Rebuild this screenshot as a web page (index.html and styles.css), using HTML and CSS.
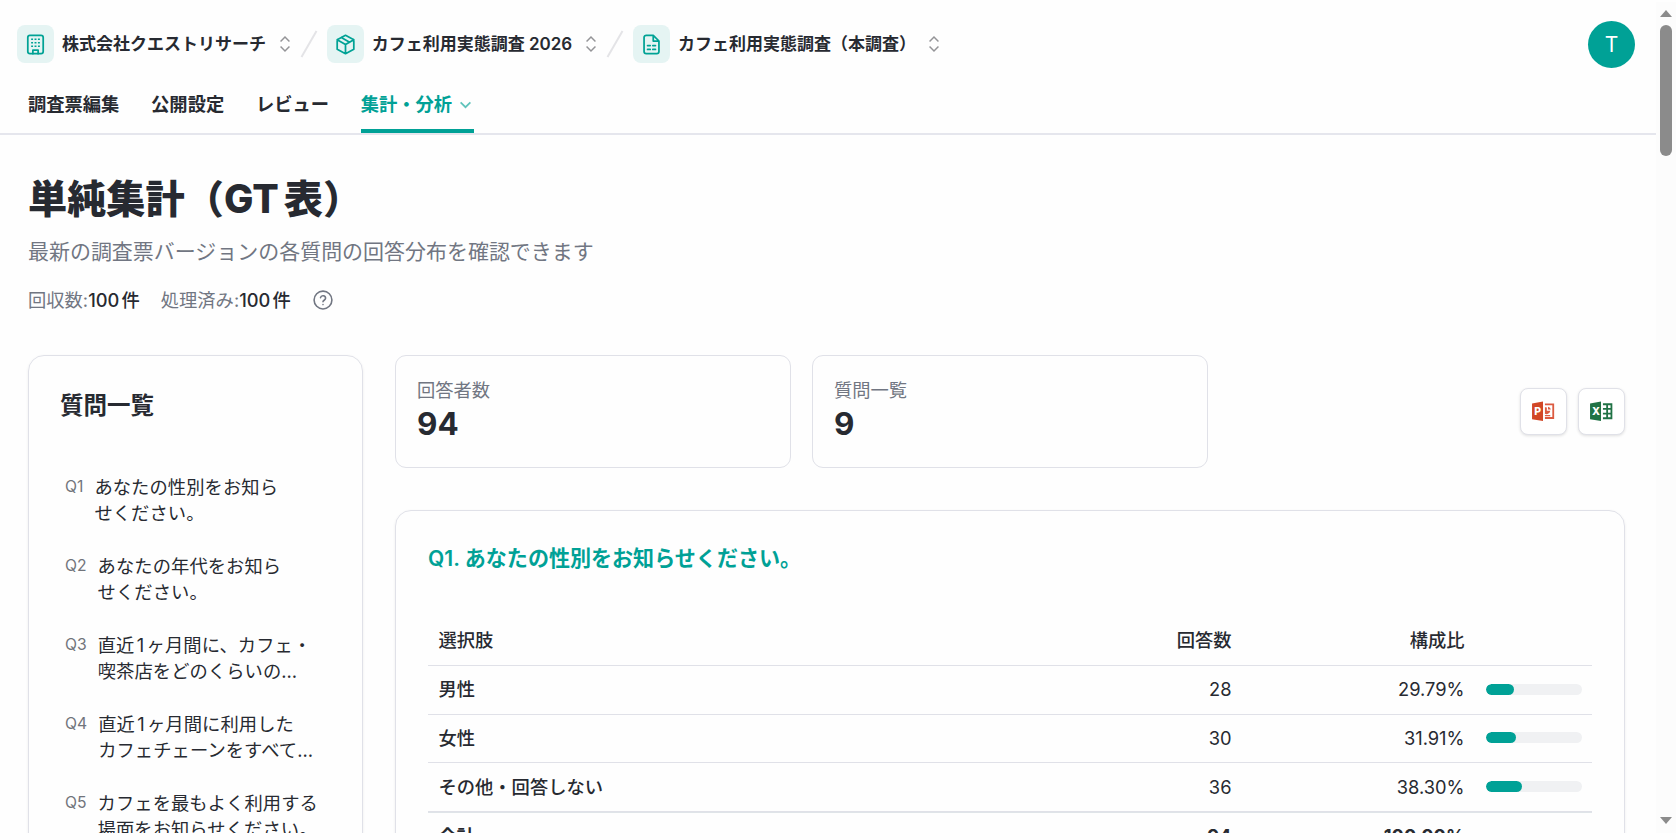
FILE: index.html
```html
<!DOCTYPE html>
<html lang="ja">
<head>
  <meta charset="UTF-8" />
  <meta name="viewport" content="width=device-width, initial-scale=1.0" />
  <title>単純集計（GT 表）</title>
  <link rel="stylesheet" href="styles.css">
</head>
<body>
  <div class="window">
    <div class="page">
      <header class="header">
        <div class="breadcrumb">
          <div class="crumb">
            <span class="crumb-icon">
              <!-- building -->
              <svg viewBox="0 0 24 24"><rect x="3.2" y="1.500" width="17.600" height="21" rx="2.500"/><path d="M9 22.500v-4h6v4"/><path class="dots" d="M7 6h2.200M10.900 6h2.200M14.800 6H17M7 10h2.200M10.900 10h2.200M14.800 10H17M7 14h2.200M10.900 14h2.200M14.800 14H17"/></svg>
            </span>
            <span class="crumb-name">株式会社クエストリサーチ</span>
            <svg class="updown" viewBox="0 0 12 18"><path d="M1 6.200l5-5 5 5M1 11.800l5 5 5-5"/></svg>
          </div>
          <svg class="slash" viewBox="0 0 18 28"><path d="M1.500 27L16.500 1"/></svg>
          <div class="crumb">
            <span class="crumb-icon">
              <!-- package -->
              <svg viewBox="0 0 24 24"><path d="M12 1.500l9.500 5v11l-9.500 5-9.500-5v-11zM2.500 6.500L12 12l9.500-5.500M12 12v10.500M7.200 4l9.500 5.400"/></svg>
            </span>
            <span class="crumb-name">カフェ利用実態調査 2026</span>
            <svg class="updown" viewBox="0 0 12 18"><path d="M1 6.200l5-5 5 5M1 11.800l5 5 5-5"/></svg>
          </div>
          <svg class="slash" viewBox="0 0 18 28"><path d="M1.500 27L16.500 1"/></svg>
          <div class="crumb">
            <span class="crumb-icon">
              <!-- spreadsheet file -->
              <svg viewBox="0 0 24 24"><path d="M14 1.500H6a2.500 2.500 0 0 0-2.500 2.500v16A2.500 2.500 0 0 0 6 22.500h12a2.500 2.500 0 0 0 2.500-2.500V8zM14 1.500V8h6.500M7.500 13.200h3M13.500 13.200h3M7.500 17.700h3M13.500 17.700h3"/></svg>
            </span>
            <span class="crumb-name">カフェ利用実態調査（本調査）</span>
            <svg class="updown" viewBox="0 0 12 18"><path d="M1 6.200l5-5 5 5M1 11.800l5 5 5-5"/></svg>
          </div>
          <div class="avatar">T</div>
        </div>
        <nav class="tabs">
          <a class="tab">調査票編集</a>
          <a class="tab">公開設定</a>
          <a class="tab">レビュー</a>
          <a class="tab active">集計・分析
            <svg viewBox="0 0 12 12"><path d="M1.500 4l4.500 4.500L10.500 4"/></svg>
          </a>
        </nav>
      </header>

      <main class="main">
        <h1 class="title">単純集計（GT 表）</h1>
        <p class="subtitle">最新の調査票バージョンの各質問の回答分布を確認できます</p>
        <div class="counts">
          <span>回収数:<b>100 件</b></span>
          <span>処理済み:<b>100 件</b></span>
          <svg class="help" viewBox="0 0 24 24"><circle cx="12" cy="12" r="10.700"/><path d="M9 9.200a3.100 3.100 0 0 1 6.100.8c0 2-3.100 2.500-3.100 4.100M12 17.300v.2"/></svg>
        </div>

        <div class="layout">
          <aside class="sidebar">
            <h2>質問一覧</h2>
            <ul class="questions">
              <li><span class="qno">Q1</span><span class="qtext">あなたの性別をお知ら<br>せください。</span></li>
              <li><span class="qno">Q2</span><span class="qtext">あなたの年代をお知ら<br>せください。</span></li>
              <li><span class="qno">Q3</span><span class="qtext">直近<span class="digit">1</span>ヶ月間に、カフェ・<br>喫茶店をどのくらいの…</span></li>
              <li><span class="qno">Q4</span><span class="qtext">直近<span class="digit">1</span>ヶ月間に利用した<br>カフェチェーンをすべて…</span></li>
              <li><span class="qno">Q5</span><span class="qtext">カフェを最もよく利用する<br>場面をお知らせください。</span></li>
            </ul>
          </aside>

          <section class="content">
            <div class="summary">
              <div class="stat">
                <div class="stat-label">回答者数</div>
                <div class="stat-value">94</div>
              </div>
              <div class="stat">
                <div class="stat-label">質問一覧</div>
                <div class="stat-value">9</div>
              </div>
              <div class="exports">
                <button class="export" aria-label="PowerPoint">
                  <svg viewBox="0 0 24 22">
                    <path fill="#d24726" d="M0 2.500L11.500 0.500v20.500L0 19z"/>
                    <path fill="none" stroke="#dc5b41" stroke-width="1.900" d="M13.500 3.600h8.700v14.200h-8.700"/>
                    <path fill="#dc5b41" d="M13.500 6.500a3.600 3.600 0 0 1 2 .3v3.400h3.600a4 4 0 0 1-5.600 3.200zM16.700 6a3.500 3.500 0 0 1 3 3h-3zM13.500 14.600h5.600v1.400h-5.600z"/>
                    <text x="2.200" y="15">P</text>
                  </svg>
                </button>
                <button class="export" aria-label="Excel">
                  <svg viewBox="0 0 24 22">
                    <path fill="#207245" d="M0 2.500L11.500 0.500v20.500L0 19z"/>
                    <path fill="none" stroke="#207245" stroke-width="1.900" d="M13.500 3.400h8.900v14.700h-8.900M13.500 8.200h8.900M13.500 13.200h8.900M17.900 3.400v14.700"/>
                    <text x="2" y="15">X</text>
                  </svg>
                </button>
              </div>
            </div>

            <div class="card">
              <h3>Q1. あなたの性別をお知らせください。</h3>
              <table class="gt">
                <thead>
                  <tr><th>選択肢</th><th class="num">回答数</th><th class="num">構成比</th><th class="bar-col"></th></tr>
                </thead>
                <tbody>
                  <tr><td class="choice">男性</td><td class="num">28</td><td class="num">29.79%</td><td><div class="bar"><div class="fill" style="width: 29.79%"></div></div></td></tr>
                  <tr><td class="choice">女性</td><td class="num">30</td><td class="num">31.91%</td><td><div class="bar"><div class="fill" style="width: 31.91%"></div></div></td></tr>
                  <tr><td class="choice">その他・回答しない</td><td class="num">36</td><td class="num">38.30%</td><td><div class="bar"><div class="fill" style="width: 38.3%"></div></div></td></tr>
                  <tr class="total"><td>合計</td><td class="num">94</td><td class="num">100.00%</td><td></td></tr>
                </tbody>
              </table>
            </div>
          </section>
        </div>
      </main>
    </div>

    <div class="scrollbar">
      <svg class="arrow" viewBox="0 0 12 7"><path d="M6 0l6 7H0z"/></svg>
      <div class="thumb"></div>
      <svg class="arrow down" viewBox="0 0 12 7"><path d="M0 0h12L6 7z"/></svg>
    </div>
  </div>
</body>
</html>
```
FILE: styles.css
```css
* {
  box-sizing: border-box;
}
body {
  margin: 0;
  background-color: #fefefe;
  color: #272a31;
  font-family: Inter, "Noto Sans CJK JP", sans-serif;
  font-size: 18.3px;
  overflow: hidden;
}
h1, h2, h3, p, ul {
  margin: 0;
  padding: 0;
}
svg {
  display: block;
  flex-shrink: 0;
}
.window {
  display: flex;
  height: 831px;
  margin-top: 2px;
  overflow: hidden;
}
.page {
  flex: 1;
  min-width: 0;
  overflow: hidden;
}

/* Header */
.header {
  height: 133px;
  border-bottom: 2px solid #e5e6ed;
}
.breadcrumb {
  display: flex;
  align-items: center;
  height: 84px;
  padding: 0 21px 0 17px;
}
.crumb {
  display: flex;
  align-items: center;
}
.crumb-icon {
  display: flex;
  align-items: center;
  justify-content: center;
  width: 37px;
  height: 38px;
  border-radius: 8px;
  background-color: #e5f4f3;
}
.crumb-icon svg {
  width: 21px;
  height: 21px;
  fill: none;
  stroke: #00a295;
  stroke-width: 2;
  stroke-linecap: round;
  stroke-linejoin: round;
}
.crumb-icon .dots {
  stroke-width: 1.6;
  stroke-linecap: butt;
}
.crumb-name {
  margin-left: 8px;
  font-size: 17px;
  font-weight: 600;
  line-height: 26px;
  white-space: nowrap;
}
.updown {
  width: 12px;
  height: 16px;
  margin-left: 12.5px;
  fill: none;
  stroke: #949497;
  stroke-width: 1.7;
}
.slash {
  width: 18px;
  height: 28px;
  margin: 0 8.5px 0 9.7px;
  fill: none;
  stroke: #e4e4e7;
  stroke-width: 2;
}
.avatar {
  width: 47px;
  height: 47px;
  margin-left: auto;
  border-radius: 50%;
  background-color: #00a196;
  color: #fff;
  font-size: 21px;
  line-height: 47px;
  text-align: center;
}
.tabs {
  display: flex;
  gap: 31.7px;
  height: 47px;
  padding-left: 28px;
}
.tab {
  height: 47px;
  font-weight: 600;
  line-height: 36px;
  white-space: nowrap;
}
.tab.active {
  display: flex;
  gap: 7px;
  padding-right: 2px;
  border-bottom: 4px solid #00a196;
  color: #00a196;
}
.tab.active svg {
  width: 13px;
  height: 13px;
  margin-top: 12px;
  fill: none;
  stroke: #5fc3bb;
  stroke-width: 1.6;
}

/* Page heading */
.main {
  padding: 38px 31px 0 28px;
}
.title {
  font-size: 39.2px;
  font-weight: 800;
  line-height: 52px;
  word-spacing: -3.5px;
}
.subtitle {
  margin-top: 11px;
  color: #717682;
  font-size: 20.98px;
  line-height: 32px;
}
.counts {
  display: flex;
  align-items: center;
  gap: 21px;
  height: 26px;
  margin-top: 18px;
  color: #717682;
  word-spacing: -2.7px;
}
.counts b {
  color: #272a31;
  font-weight: 500;
}
.help {
  width: 20px;
  height: 20px;
  margin: 1px 0 0 1px;
  fill: none;
  stroke: #717682;
  stroke-width: 1.9;
  stroke-linecap: round;
}

/* Question list on the left, results on the right */
.layout {
  display: flex;
  align-items: flex-start;
  gap: 32px;
  margin-top: 43px;
}
.sidebar {
  width: 335px;
  height: 900px;
  padding: 34px 31px;
  border: 1.5px solid #e0e1e8;
  border-radius: 16px;
  box-shadow: 0 1px 3px rgba(0,0,0,0.07);
}
.sidebar h2 {
  font-size: 23.5px;
  font-weight: 600;
  line-height: 32px;
}
.questions {
  margin-top: 52px;
  padding-left: 5px;
  list-style: none;
}
.questions li {
  display: flex;
  gap: 11px;
  height: 79px;
  line-height: 26.2px;
  white-space: nowrap;
}
.qno {
  color: #71747b;
  font-size: 15.7px;
}
.qtext {
  letter-spacing: 0.08px;
}
/* Thin space between a digit and the kanji around it */
.digit {
  margin: 0 2.3px;
}
.content {
  flex: 1;
  min-width: 0;
}
.summary {
  display: flex;
  align-items: center;
  gap: 21px;
}
.stat {
  width: 396px;
  height: 113px;
  padding: 20px 21px;
  border: 1.5px solid #e0e1e8;
  border-radius: 11px;
}
.stat-label {
  color: #717682;
  line-height: 28px;
}
.stat-value {
  font-size: 31.4px;
  font-weight: 700;
  line-height: 40px;
}
.exports {
  display: flex;
  gap: 11px;
  margin-left: auto;
}
.export {
  display: flex;
  align-items: center;
  justify-content: center;
  width: 47px;
  height: 47px;
  padding: 0;
  border: 1.5px solid #e0e1e8;
  border-radius: 8px;
  background-color: #fff;
  box-shadow: 0 1px 3px rgba(0,0,0,0.12);
}
.export svg {
  width: 23px;
  height: 21px;
}
.export text {
  fill: #fff;
  font-family: Inter, sans-serif;
  font-size: 11px;
  font-weight: 800;
}

/* Result table */
.card {
  height: 800px;
  margin-top: 42px;
  padding: 32px 32px;
  border: 1.5px solid #e0e1e8;
  border-radius: 16px;
  box-shadow: 0 1px 3px rgba(0,0,0,0.07);
}
.card h3 {
  color: #00a196;
  font-size: 21.05px;
  font-weight: 600;
  line-height: 32px;
}
.gt {
  width: 100%;
  margin-top: 39px;
  border-collapse: separate;
  border-spacing: 0;
  table-layout: fixed;
}
.gt th, .gt td {
  height: 48.65px;
  padding: 0 10.5px 1px;
  border-bottom: 1.5px solid #e0e1e8;
  font-weight: 400;
  line-height: 26px;
  text-align: left;
}
.gt th {
  height: 52px;
  padding-bottom: 0;
  font-weight: 500;
}
.gt th:nth-child(2) {
  width: 233px;
}
.gt th:nth-child(3) {
  width: 233px;
}
.gt th.bar-col {
  width: 117px;
}
.gt .num {
  text-align: right;
}
.gt .choice {
  font-weight: 500;
}
.gt .total td {
  border-top: 1.5px solid #dfe4e8;
  font-weight: 700;
}
.bar {
  height: 11px;
  border-radius: 6px;
  background-color: #f0f1f3;
  overflow: hidden;
}
.fill {
  height: 100%;
  border-radius: 6px;
  background-color: #00a196;
}

/* Scrollbar */
.scrollbar {
  display: flex;
  flex-direction: column;
  align-items: center;
  width: 20px;
  padding: 8px 0 9px;
  background-color: #fcfcfc;
}
.arrow {
  width: 12px;
  height: 7px;
  fill: #8b8b8b;
}
.arrow.down {
  margin-top: auto;
}
.thumb {
  width: 12px;
  height: 131px;
  margin-top: 8px;
  border-radius: 6px;
  background-color: #8b8b8b;
}
```
